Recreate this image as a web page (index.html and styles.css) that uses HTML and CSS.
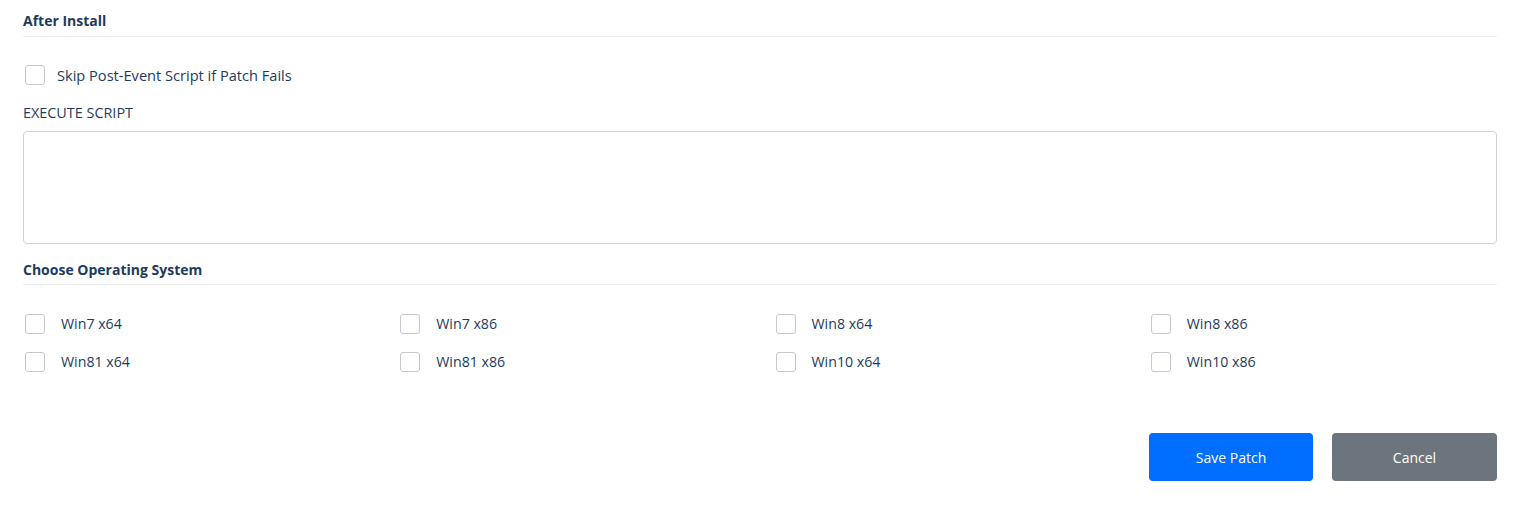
FILE: index.html
```html
<!DOCTYPE html>
<html>
<head>
<meta charset="utf-8">
<link rel="stylesheet" href="styles.css">
</head>
<body>
<div class="page">
  <div class="section-title">After Install</div>
  <label class="check skip"><span class="box"></span><span class="lbl">Skip Post-Event Script if Patch Fails</span></label>
  <div class="field-label">EXECUTE SCRIPT</div>
  <div class="textarea"></div>
  <div class="section-title os">Choose Operating System</div>
  <div class="os-grid">
    <label class="check"><span class="box"></span><span class="lbl">Win7 x64</span></label>
    <label class="check"><span class="box"></span><span class="lbl">Win7 x86</span></label>
    <label class="check"><span class="box"></span><span class="lbl">Win8 x64</span></label>
    <label class="check"><span class="box"></span><span class="lbl">Win8 x86</span></label>
    <label class="check"><span class="box"></span><span class="lbl">Win81 x64</span></label>
    <label class="check"><span class="box"></span><span class="lbl">Win81 x86</span></label>
    <label class="check"><span class="box"></span><span class="lbl">Win10 x64</span></label>
    <label class="check"><span class="box"></span><span class="lbl">Win10 x86</span></label>
  </div>
  <div class="actions">
    <button class="btn primary">Save Patch</button>
    <button class="btn secondary">Cancel</button>
  </div>
</div>
</body>
</html>
```
FILE: styles.css
```css
html, body { margin: 0; padding: 0; background: #fff; }
body { font-family: "Open Sans", "Noto Sans", sans-serif; color: #1d3b5e; font-size: 14px; }
.page { padding: 11px 20px 0 23px; }
.section-title {
  font-weight: 700; font-size: 14px; line-height: 20px;
  padding-bottom: 5px; border-bottom: 1px solid #e8eaee;
}
.check { display: flex; align-items: center; gap: 12px; cursor: pointer; }
.box {
  width: 18px; height: 18px; border: 1px solid #c6c8d0; border-radius: 3px;
  box-sizing: content-box; margin-left: 2px; flex: none; background: #fff;
}
.lbl { font-size: 14.6px; line-height: 20px; }
.skip { margin-top: 28px; }
.field-label { margin-top: 18px; line-height: 20px; font-size: 14.4px; }
.textarea {
  margin-top: 8px; height: 111px; border: 1px solid #cfd2d8; border-radius: 4px;
}
.section-title.os { margin-top: 16px; padding-bottom: 4px; }
.os-grid {
  display: grid; grid-template-columns: repeat(4, 1fr); column-gap: 0; row-gap: 18px;
  margin-top: 29px; margin-right: -27px;
}
.os-grid .check { gap: 16px; }
.os-grid .lbl { font-size: 14.2px; }
.actions { display: flex; justify-content: flex-end; gap: 19px; margin-top: 61px; }
.btn {
  width: 165px; height: 48px; border: none; border-radius: 4px; color: #fff;
  font-family: "Open Sans", "Noto Sans", sans-serif; font-size: 14px;
}
.btn.primary { width: 164px; }
.primary { background: #006eff; }
.secondary { background: #6c757d; }
```
